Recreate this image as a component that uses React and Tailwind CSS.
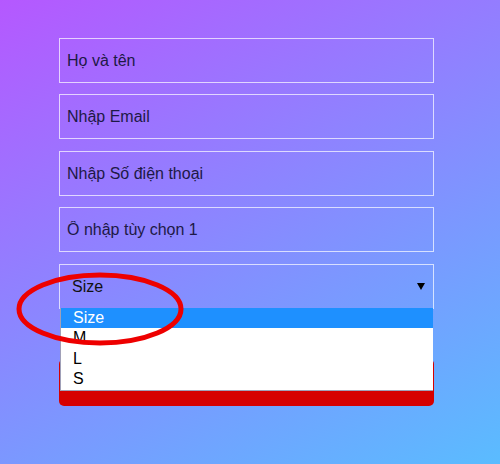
import React from "react";

export default function App() {
  const inputCls =
    "block w-full h-[45px] border border-white/70 bg-transparent px-[7px] text-[16px] outline-none placeholder:text-[#1d1946] text-[#1d1946]";
  return (
    <div
      className="w-full h-[464px] overflow-hidden bg-[linear-gradient(152deg,#b558ff,#5abcff)]"
      style={{ fontFamily: '"Liberation Sans", Arial, sans-serif' }}
    >
      <div className="relative ml-[59px] w-[375px] pt-[38px]">
        <input className={inputCls + " mb-[11px]"} placeholder="Họ và tên" />
        <input className={inputCls + " mb-[12px]"} placeholder="Nhập Email" />
        <input className={inputCls + " mb-[11px]"} placeholder="Nhập Số điện thoại" />
        <input className={inputCls + " mb-[12px]"} placeholder="Ô nhập tùy chọn 1" />

        <div className="relative">
          <div className="flex items-center justify-between h-[45px] border border-white/70 pl-[12px] pr-[8px] text-[16px] text-[#111]">
            <span>Size</span>
            <svg width="8" height="7" viewBox="0 0 8 7" className="mr-[0px]">
              <polygon points="0,0 8,0 4,7" fill="#000" />
            </svg>
          </div>

          <div className="mt-[50px] h-[47px] rounded-[5px] bg-[#d60000]" />

          <div className="absolute left-[1px] top-[44px] w-[373px] h-[83px] bg-white border-l border-b border-[#a0a0b8] text-[16px] leading-[20px] text-black">
            <div className="h-[20px] bg-[#1e90ff] pl-[12px] text-white">Size</div>
            <div className="h-[20.5px] pl-[12px]">M</div>
            <div className="h-[20.5px] pl-[12px]">L</div>
            <div className="h-[20.5px] pl-[12px]">S</div>
          </div>
        </div>
      </div>

      <svg
        className="absolute left-0 top-0 pointer-events-none"
        width="500"
        height="464"
        viewBox="0 0 500 464"
      >
        <ellipse cx="100" cy="309" rx="81" ry="34" fill="none" stroke="#ee0000" strokeWidth="5" />
      </svg>
    </div>
  );
}
